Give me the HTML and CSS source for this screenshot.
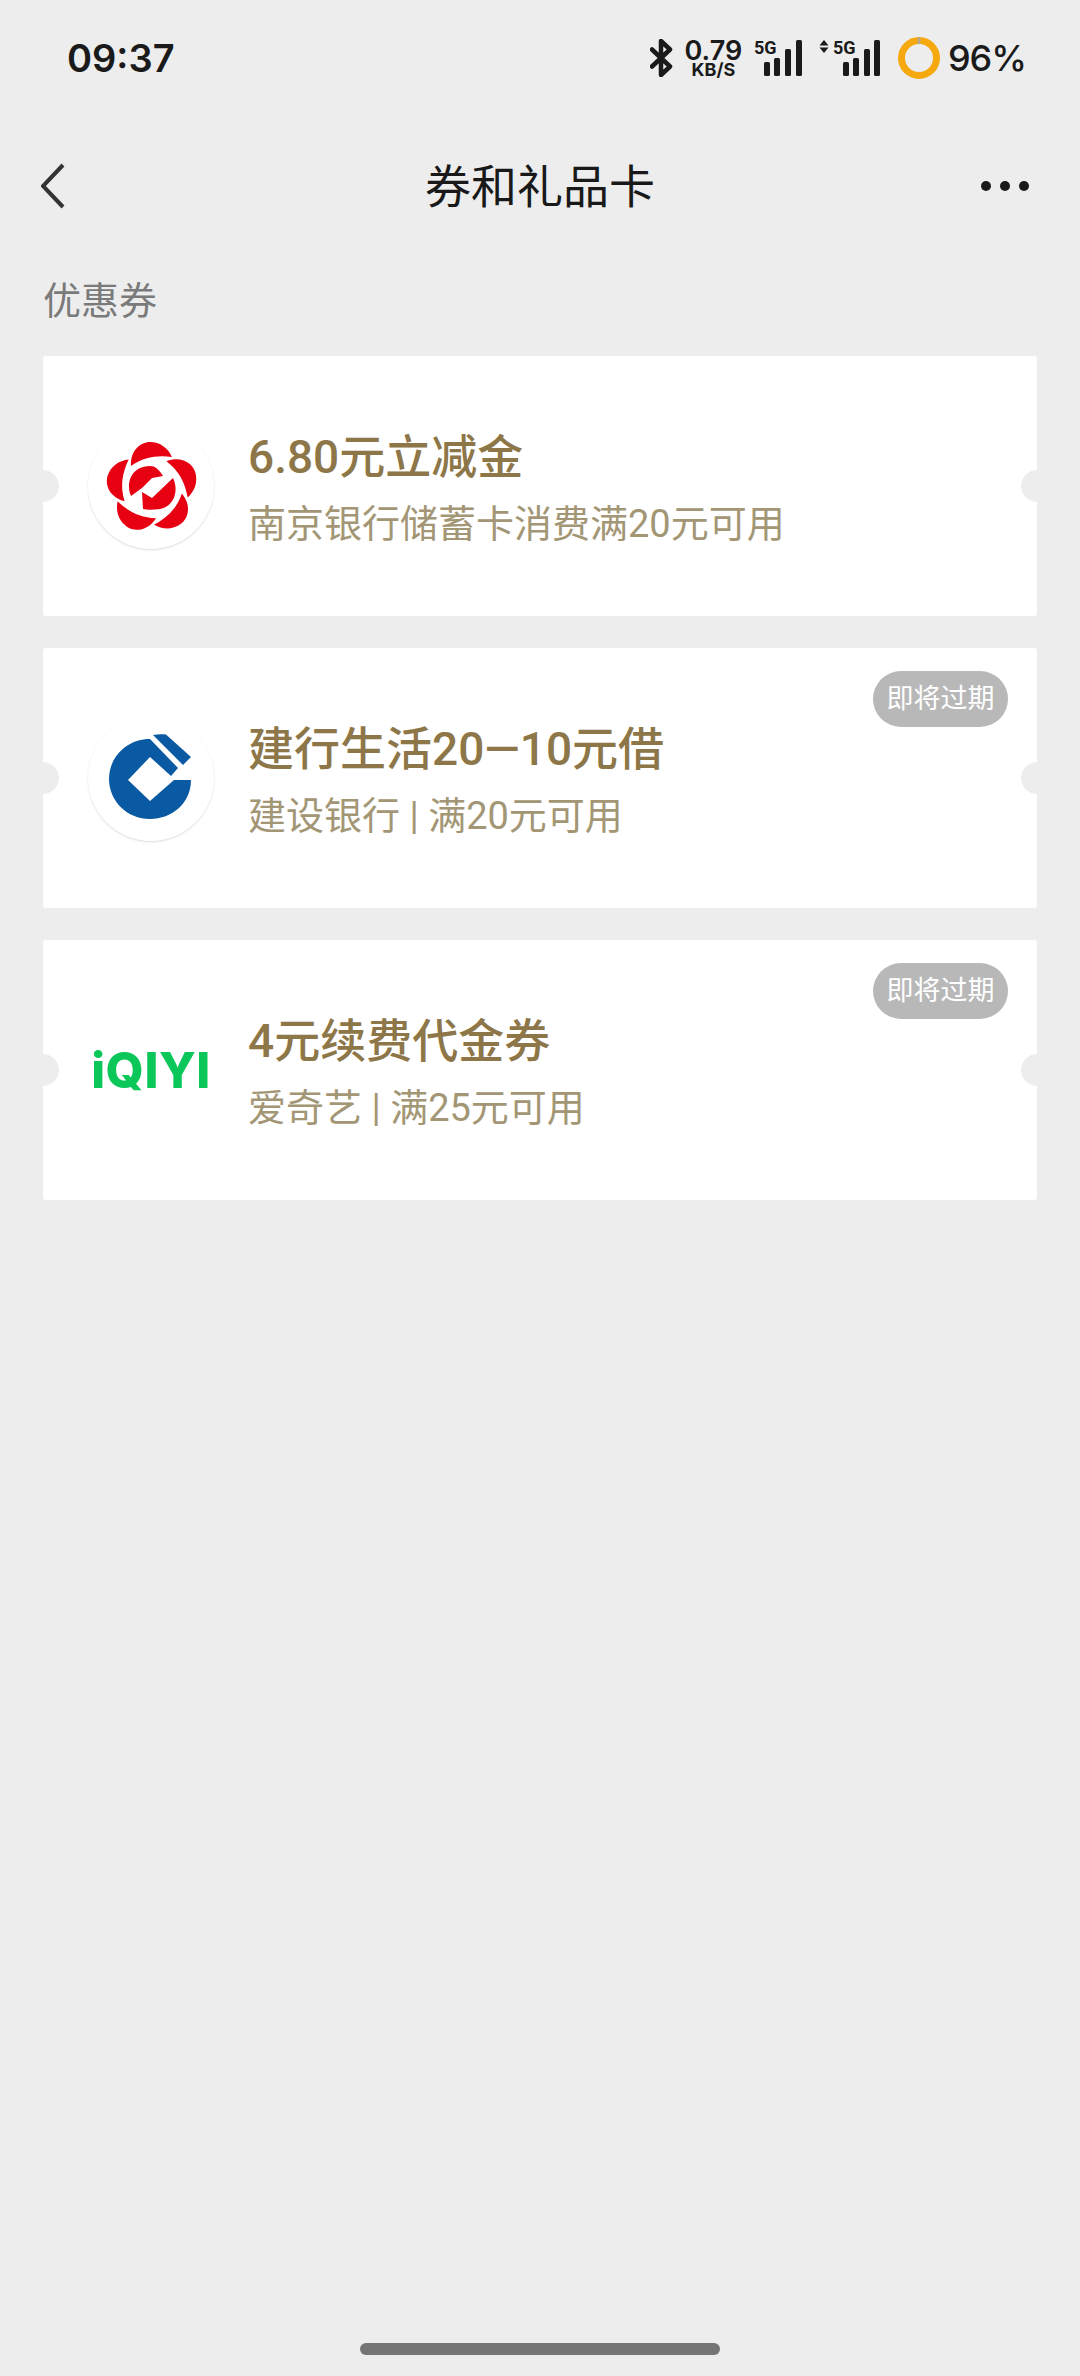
FILE: index.html
```html
<!DOCTYPE html>
<html lang="zh-CN">
  <head>
    <meta charset="UTF-8" />
    <meta name="viewport" content="width=device-width, initial-scale=1.0" />
    <title>券和礼品卡</title>
    <link rel="stylesheet" href="styles.css">
  </head>
  <body>
    <div class="statusBar">
      <span class="time">09:37</span>
      <div class="statusIcons">
        <svg class="btIcon" width="23" height="38" viewBox="0 0 23 38">
          <path d="M2 10.500 L20 27.500 L11 36 V2 L20 10.500 L2 27.500" fill="none" stroke="#1a1a1a" stroke-width="4.500" stroke-linejoin="round" stroke-linecap="round"/>
        </svg>
        <div class="speed">
          <span class="speedNum">0.79</span>
          <span class="speedUnit">KB/S</span>
        </div>
        <div class="signal">
          <span class="signalText">5G</span>
          <svg width="48" height="38" viewBox="0 0 48 38">
            <rect x="10" y="23" width="6" height="14" rx="1.500"/>
            <rect x="20" y="19" width="6" height="18" rx="1.500"/>
            <rect x="31" y="10" width="6" height="27" rx="1.500"/>
            <rect x="42" y="1" width="6" height="36" rx="1.500"/>
          </svg>
        </div>
        <div class="signal signalSecond">
          <span class="signalText">5G</span>
          <svg width="62" height="38" viewBox="0 0 62 38">
            <path d="M5 1 L9.500 6.500 H0.500 Z M5 14 L9.500 8.500 H0.500 Z"/>
            <rect x="24" y="23" width="6" height="14" rx="1.500"/>
            <rect x="34" y="19" width="6" height="18" rx="1.500"/>
            <rect x="45" y="10" width="6" height="27" rx="1.500"/>
            <rect x="55" y="1" width="6" height="36" rx="1.500"/>
          </svg>
        </div>
        <svg class="battery" width="42" height="42" viewBox="0 0 42 42">
          <circle cx="21" cy="21" r="17.500" fill="none" stroke="#f5a90f" stroke-width="7"/>
          <path d="M19.600 0.500 H22.400 V7 H19.600 Z" fill="#b5a98c"/>
        </svg>
        <span class="batteryText">96%</span>
      </div>
    </div>

    <div class="navBar">
      <svg class="backIcon" width="24" height="46" viewBox="0 0 24 46">
        <path d="M22 2 L2 23 L22 44" fill="none" stroke="#333" stroke-width="4"/>
      </svg>
      <h1 class="navTitle">券和礼品卡</h1>
      <div class="moreDots"><span></span><span></span><span></span></div>
    </div>

    <div class="sectionLabel">优惠券</div>

    <div class="cardList">
      <div class="card">
        <div class="logoBox round">
          <svg class="flowerLogo" width="100" height="100" viewBox="0 0 100 100" fill="#e60012">
            <path d="M31 31 C30 16 40 7 50 7 C60 7 68 13 72 22 C57 20 44 22 31 31Z"/>
            <path transform="rotate(72 52 53)" d="M31 31 C30 16 40 7 50 7 C60 7 68 13 72 22 C57 20 44 22 31 31Z"/>
            <path transform="rotate(144 52 53)" d="M31 31 C30 16 40 7 50 7 C60 7 68 13 72 22 C57 20 44 22 31 31Z"/>
            <path transform="rotate(216 52 53)" d="M31 31 C30 16 40 7 50 7 C60 7 68 13 72 22 C57 20 44 22 31 31Z"/>
            <path transform="rotate(288 52 53)" d="M31 31 C30 16 40 7 50 7 C60 7 68 13 72 22 C57 20 44 22 31 31Z"/>
            <path d="M31 61 C25 46 33 31 50 31 C56 31 60 36 63 41 L52 43 L42 53Z"/>
            <path d="M42 57 L52 63 L73 43 C80 58 72 72 60 74 C53 75 47 75 43 74Z"/>
          </svg>
        </div>
        <div class="cardText">
          <div class="cardTitle">6.80元立减金</div>
          <div class="cardDesc">南京银行储蓄卡消费满20元可用</div>
        </div>
      </div>

      <div class="card">
        <div class="logoBox round">
          <svg class="ccbLogo" width="100" height="100" viewBox="0 0 100 100" fill="#0a5aa3">
            <path d="M53 10 C58 9 62 9 66 9.500 L91 32 L83 40Z"/>
            <path d="M50 14 L78 43 L71 51 L50 32 L28 55 L50 76 L74 55 H91 C91 78 72 94 50 94 C27 94 9 76 9 54 C9 32 27 14 50 14Z"/>
          </svg>
        </div>
        <div class="cardText">
          <div class="cardTitle">建行生活20—10元借</div>
          <div class="cardDesc">建设银行 | 满20元可用</div>
        </div>
        <span class="expireTag">即将过期</span>
      </div>

      <div class="card">
        <div class="logoBox"><span class="iqiyi">iQIYI</span></div>
        <div class="cardText">
          <div class="cardTitle">4元续费代金券</div>
          <div class="cardDesc">爱奇艺 | 满25元可用</div>
        </div>
        <span class="expireTag">即将过期</span>
      </div>
    </div>

    <div class="homeBar"></div>
  </body>
</html>
```

FILE: styles.css
```css
* {
  margin: 0;
  padding: 0;
  box-sizing: border-box;
}
body {
  width: 1080px;
  height: 2376px;
  background-color: #ededed;
  display: flex;
  flex-direction: column;
  font-family: Roboto, "Noto Sans CJK SC", sans-serif;
  overflow: hidden;
}
.statusBar {
  height: 116px;
  display: flex;
  align-items: center;
  justify-content: space-between;
  padding: 0 54px 0 67px;
  font-family: Inter, sans-serif;
  color: #1a1a1a;
}
.time {
  font-size: 38px;
  font-weight: 600;
}
.statusIcons {
  display: flex;
  align-items: center;
}
.btIcon {
  margin-right: 13px;
  flex-shrink: 0;
}
.speed {
  width: 55px;
  flex-shrink: 0;
  margin-right: 13px;
  display: flex;
  flex-direction: column;
  align-items: center;
}
.speedNum {
  font-size: 27px;
  font-weight: 600;
  line-height: 24px;
}
.speedUnit {
  font-size: 18px;
  font-weight: 700;
  line-height: 14px;
}
.signal {
  position: relative;
  height: 38px;
  fill: #1a1a1a;
}
.signalSecond {
  margin-left: 17px;
}
.signalText {
  position: absolute;
  top: 0;
  left: 0;
  font-family: Roboto, sans-serif;
  font-size: 18px;
  font-weight: 700;
  line-height: 17px;
}
.signalSecond .signalText {
  left: 14px;
}
.battery {
  margin-left: 17px;
  margin-right: 8px;
  flex-shrink: 0;
}
.batteryText {
  font-size: 36px;
  font-weight: 500;
  letter-spacing: -1px;
}
.navBar {
  height: 140px;
  display: flex;
  align-items: center;
  justify-content: space-between;
  padding: 0 51px 0 41px;
  position: relative;
}
.navTitle {
  position: absolute;
  left: 0;
  right: 0;
  padding-bottom: 6px;
  text-align: center;
  font-size: 46px;
  font-weight: 400;
  color: #191919;
}
.moreDots {
  display: flex;
  gap: 9px;
}
.moreDots span {
  width: 10px;
  height: 10px;
  border-radius: 50%;
  background-color: #1a1a1a;
}
.sectionLabel {
  height: 100px;
  padding: 0 0 0 43px;
  line-height: 90px;
  font-size: 38px;
  color: #7a7a7a;
}
.cardList {
  display: flex;
  flex-direction: column;
  gap: 32px;
  padding: 0 43px;
}
.card {
  position: relative;
  height: 260px;
  background-color: #fff;
  border-radius: 3px;
  display: flex;
  align-items: center;
  gap: 34px;
  padding-left: 45px;
  overflow: hidden;
}
.card::before,
.card::after {
  content: "";
  position: absolute;
  top: 114px;
  width: 32px;
  height: 32px;
  border-radius: 50%;
  background-color: #ededed;
}
.card::before {
  left: -16px;
}
.card::after {
  right: -16px;
}
.logoBox {
  width: 126px;
  height: 126px;
  flex-shrink: 0;
  display: flex;
  align-items: center;
  justify-content: center;
}
.round {
  border-radius: 50%;
  box-shadow: 0 1px 2px rgba(0, 0, 0, 0.14);
}
.flowerLogo {
  margin: 0 2px 2px 0;
}
.ccbLogo {
  margin: 0 2px 6px 0;
}
.iqiyi {
  font-family: Inter, sans-serif;
  font-size: 49px;
  font-weight: 800;
  letter-spacing: 0.5px;
  color: #0bc75a;
}
.cardText {
  padding-top: 4px;
}
.cardTitle {
  font-size: 46px;
  font-weight: 500;
  line-height: 64px;
  color: #8d7648;
}
.cardDesc {
  margin-top: 7px;
  font-size: 38px;
  line-height: 56px;
  color: #a39675;
}
.expireTag {
  position: absolute;
  top: 23px;
  right: 29px;
  width: 135px;
  height: 56px;
  border-radius: 28px;
  background-color: #b8b8b8;
  color: #fff;
  font-size: 27px;
  line-height: 56px;
  text-align: center;
}
.homeBar {
  width: 360px;
  height: 12px;
  margin: auto auto 21px;
  border-radius: 6px;
  background-color: #757575;
}
```
